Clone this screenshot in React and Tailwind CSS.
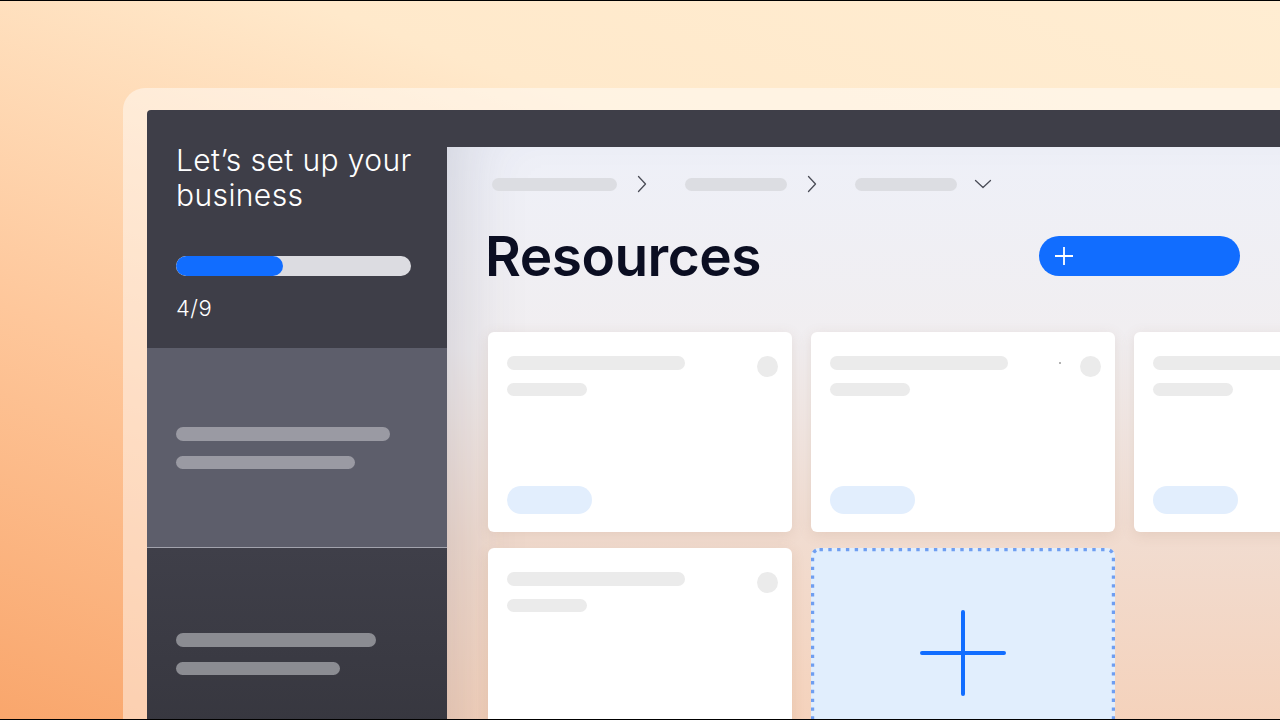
import React from "react";

const font = { fontFamily: "Inter, 'Noto Sans', sans-serif" };

function Chevron() {
  return (
    <svg width="10" height="18" viewBox="0 0 10 18" fill="none">
      <path d="M1.5 1.5 L8.5 9 L1.5 16.5" stroke="#4b4d57" strokeWidth="1.3" strokeLinecap="round" strokeLinejoin="round" />
    </svg>
  );
}

function ChevronDown() {
  return (
    <svg width="18" height="10" viewBox="0 0 18 10" fill="none">
      <path d="M1.5 1.5 L9 8.5 L1.5 1.5 M9 8.5 L16.5 1.5" stroke="#4b4d57" strokeWidth="1.3" strokeLinecap="round" strokeLinejoin="round" />
    </svg>
  );
}

function Card({ dot, tall }) {
  return (
    <div
      className={
        tall
          ? "relative flex h-[230px] flex-col justify-between rounded-[6px] bg-white pb-[18px] pl-[19px] pr-[14px] pt-[24px] shadow-[0_3px_14px_rgba(140,90,60,0.13)]"
          : "relative flex h-[200px] flex-col justify-between rounded-[6px] bg-white pb-[18px] pl-[19px] pr-[14px] pt-[24px] shadow-[0_3px_14px_rgba(140,90,60,0.13)]"
      }
    >
      <div className="flex items-start justify-between">
        <div className="flex flex-col gap-[13px]">
          <div className="h-[14px] w-[178px] rounded-full bg-[#ebebeb]" />
          <div className="h-[13px] w-[80px] rounded-full bg-[#ebebeb]" />
        </div>
        <div className="h-[21px] w-[21px] rounded-full bg-[#ebebeb]" />
      </div>
      {dot && <div className="absolute right-[54px] top-[30px] h-[2px] w-[2px] rounded-full bg-[#9a9a9a]" />}
      <div className="h-[28px] w-[85px] rounded-full bg-[#e2eefd]" />
    </div>
  );
}

function AddCard() {
  return (
    <div className="relative flex h-[200px] items-center justify-center rounded-[8px] bg-[#e1eefd]">
      <svg className="absolute inset-0" width="100%" height="100%" preserveAspectRatio="none">
        <rect x="1.5" y="1.5" width="301" height="197" rx="7" fill="none" stroke="#6f9ef1" strokeWidth="3.4" strokeDasharray="3.4 5.4" />
      </svg>
      <svg className="mt-[10px]" width="86" height="86" viewBox="0 0 86 86" fill="none">
        <path d="M43 2 V84 M2 43 H84" stroke="#116dff" strokeWidth="4" strokeLinecap="round" />
      </svg>
    </div>
  );
}

export default function App() {
  return (
    <div
      style={font}
      className="relative h-[720px] w-[1280px] overflow-hidden border-y border-black bg-[linear-gradient(200deg,#ffedd2_0%,#ffe9cb_30%,#fec79b_65%,#f9a66c_100%)]"
    >
      <div className="ml-[123px] mt-[87px] h-[700px] rounded-tl-[22px] bg-white/45 pl-[24px] pt-[22px]">
        <div className="flex h-[640px] overflow-hidden rounded-tl-[4px] bg-[#3e3e48]">
          {/* sidebar */}
          <aside className="flex w-[300px] shrink-0 flex-col">
            <div className="px-[29px] pt-[33px]">
              <h2 className="text-[30px] font-light leading-[35px] tracking-[0.4px] text-white">
                Let’s set up your
                <br />
                business
              </h2>
              <div className="mt-[43px] h-[20px] w-[235px] overflow-hidden rounded-full bg-[#dcdce1]">
                <div className="h-full w-[107px] rounded-full bg-[#116dff]" />
              </div>
              <div className="mt-[16px] text-[22px] font-light tracking-[0.5px] text-white">4/9</div>
            </div>
            <div className="mt-[23px] flex h-[200px] flex-col gap-[15px] border-b border-[#a2a3ad] bg-[#5d5e6b] pl-[29px] pt-[79px]">
              <div className="h-[14px] w-[214px] rounded-full bg-[#9a9aa3]" />
              <div className="h-[13px] w-[179px] rounded-full bg-[#9a9aa3]" />
            </div>
            <div className="flex flex-1 flex-col gap-[15px] bg-[linear-gradient(180deg,#3f3f49,#36363e)] pl-[29px] pt-[85px]">
              <div className="h-[14px] w-[200px] rounded-full bg-[#8b8c92]" />
              <div className="h-[13px] w-[164px] rounded-full bg-[#8b8c92]" />
            </div>
          </aside>

          {/* main */}
          <div className="flex flex-1 flex-col pt-[37px]">
            <main className="relative flex-1 bg-[linear-gradient(180deg,#eef0f8_0%,#f1eef0_32%,#f1dcd0_62%,#f6cfb5_100%)] pl-[41px] pr-[40px] pt-[29px] shadow-[inset_60px_0_70px_-50px_rgba(60,60,90,0.18)]">
              <div className="ml-[4px] flex h-[16px] items-center">
                <div className="h-[13px] w-[125px] rounded-full bg-[#dcdde2]" />
                <div className="ml-[20px]"><Chevron /></div>
                <div className="ml-[38px] h-[13px] w-[102px] rounded-full bg-[#dcdde2]" />
                <div className="ml-[20px]"><Chevron /></div>
                <div className="ml-[38px] h-[13px] w-[102px] rounded-full bg-[#dcdde2]" />
                <div className="ml-[17px]"><ChevronDown /></div>
              </div>

              <div className="mt-[34px] flex w-[752px] items-center justify-between">
                <h1 className="-ml-[3px] text-[55px] font-semibold leading-[60px] tracking-[-0.5px] text-[#0b0e22]">
                  Resources
                </h1>
                <button className="flex h-[40px] w-[201px] items-center rounded-full bg-[#116dff] pl-[15px]">
                  <svg width="20" height="20" viewBox="0 0 20 20" fill="none">
                    <path d="M10 1 V19 M1 10 H19" stroke="white" strokeWidth="1.8" />
                  </svg>
                </button>
              </div>

              <div className="mt-[46px] grid w-[960px] grid-cols-[304px_304px_304px] items-start gap-x-[19px] gap-y-[16px]">
                <Card />
                <Card dot />
                <Card />
                <Card tall />
                <AddCard />
              </div>
            </main>
          </div>
        </div>
      </div>
    </div>
  );
}
